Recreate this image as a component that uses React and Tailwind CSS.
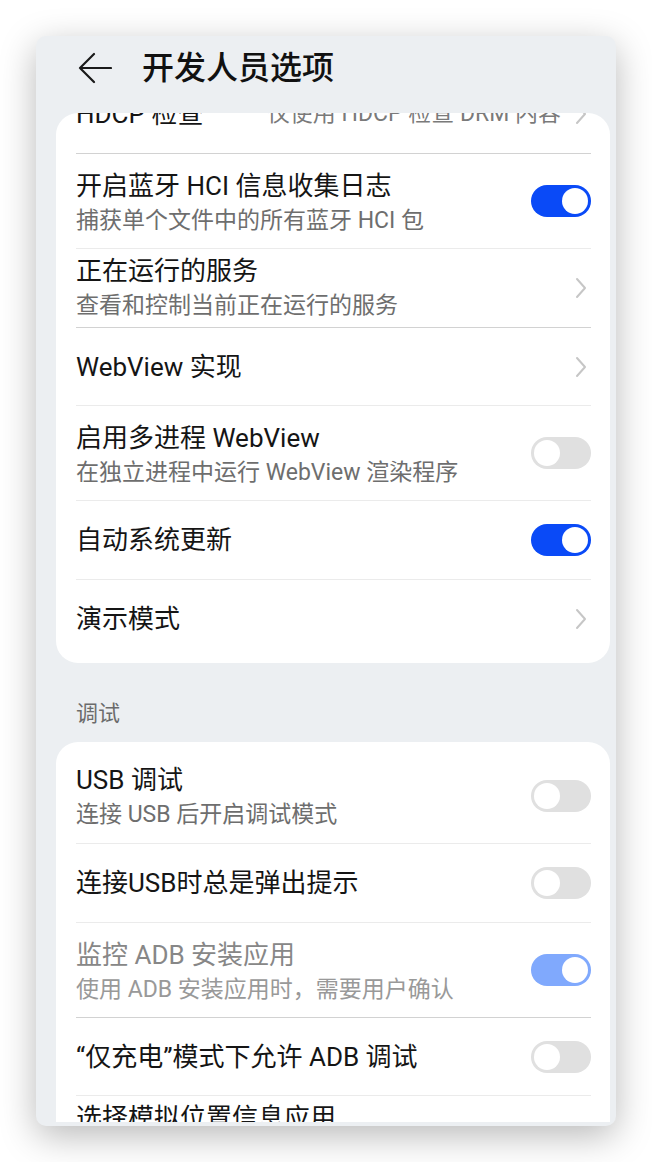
import React from "react";

function Chevron() {
  return (
    <svg width="12" height="22" viewBox="0 0 12 22" className="shrink-0 mr-[4px]">
      <path d="M2 2 L10 11 L2 20" stroke="#c6c6c6" strokeWidth="2" fill="none" strokeLinecap="round" strokeLinejoin="round" />
    </svg>
  );
}

function Toggle({ on, disabled }) {
  const track = on
    ? disabled
      ? "bg-[#80a9fd] justify-end"
      : "bg-[#0a4af7] justify-end"
    : "bg-[#e0e0e0] justify-start";
  return (
    <div className={"shrink-0 w-[60px] h-[32px] rounded-full p-[3px] flex items-center " + track}>
      <div className="w-[26px] h-[26px] rounded-full bg-white" />
    </div>
  );
}

function Row({ title, sub, value, right, h, divider, disabled }) {
  const hCls = h === 95 ? "h-[95px]" : h === 79 ? "h-[79px]" : "h-[78px]";
  const divCls =
    divider === "dark" ? "border-t border-[#d2d2d2]" : divider === "light" ? "border-t border-[#ebebeb]" : "";
  return (
    <div className={"flex items-center " + hCls + " " + divCls}>
      <div className={"flex-1 min-w-0 flex flex-col " + (sub && h === 95 ? "mt-[3px]" : "")}>
        <div className={"text-[26px] leading-[36px] whitespace-nowrap " + (disabled ? "text-[#878787]" : "text-[#151515]")}>
          {title}
        </div>
        {sub && (
          <div className={"text-[23px] leading-[34px] whitespace-nowrap " + (disabled ? "text-[#999999]" : "text-[#6e6e6e]")}>
            {sub}
          </div>
        )}
      </div>
      {value && <div className="text-[23px] leading-[34px] text-[#7a7a7a] whitespace-nowrap mr-[14px]">{value}</div>}
      {right === "chevron" && <Chevron />}
      {right === "on" && <Toggle on />}
      {right === "off" && <Toggle />}
      {right === "disabled-on" && <Toggle on disabled />}
    </div>
  );
}

const card1 = [
  { title: "HDCP 检查", value: "仅使用 HDCP 检查 DRM 内容", right: "chevron", h: 78 },
  { title: "开启蓝牙 HCI 信息收集日志", sub: "捕获单个文件中的所有蓝牙 HCI 包", right: "on", h: 95, divider: "dark" },
  { title: "正在运行的服务", sub: "查看和控制当前正在运行的服务", right: "chevron", h: 79, divider: "light" },
  { title: "WebView 实现", right: "chevron", h: 78, divider: "dark" },
  { title: "启用多进程 WebView", sub: "在独立进程中运行 WebView 渲染程序", right: "off", h: 95, divider: "light" },
  { title: "自动系统更新", right: "on", h: 79, divider: "light" },
  { title: "演示模式", right: "chevron", h: 78, divider: "light" },
];

const card2 = [
  { title: "USB 调试", sub: "连接 USB 后开启调试模式", right: "off", h: 95 },
  { title: "连接USB时总是弹出提示", right: "off", h: 79, divider: "light" },
  { title: "监控 ADB 安装应用", sub: "使用 ADB 安装应用时，需要用户确认", right: "disabled-on", h: 95, divider: "light", disabled: true },
  { title: "“仅充电”模式下允许 ADB 调试", right: "off", h: 78, divider: "dark" },
  { title: "选择模拟位置信息应用", sub: "未设置模拟位置信息应用", right: "chevron", h: 79, divider: "light" },
];

export default function App() {
  return (
    <div className="w-[652px] h-[1162px] bg-white p-[36px] font-['Roboto','Noto_Sans_CJK_SC',sans-serif]">
      <div className="w-[580px] h-[1090px] bg-[#eceff2] rounded-[10px] shadow-[0_10px_36px_rgba(0,0,0,0.28)] flex flex-col overflow-hidden">
        <div className="h-[77px] shrink-0 flex items-center pl-[42px] pb-[13px]">
          <svg width="34" height="32" viewBox="0 0 34 32" className="shrink-0">
            <path d="M16 2 L2 16 L16 30 M2 16 H33" stroke="#1a1a1a" strokeWidth="2.2" fill="none" strokeLinecap="round" strokeLinejoin="round" />
          </svg>
          <div className="ml-[30px] text-[32px] leading-[40px] font-medium text-[#111111]">开发人员选项</div>
        </div>
        <div className="h-[1009px] ml-[20px] mr-[6px] overflow-hidden rounded-t-[22px] shrink-0">
          <div className="-mt-[44px] bg-white rounded-[22px] py-[6px] pl-[20px] pr-[19px]">
            {card1.map((r, i) => (
              <Row key={i} {...r} />
            ))}
          </div>
          <div className="pt-[36px] pb-[13px] px-[20px] text-[22px] leading-[30px] text-[#6b6b6b]">调试</div>
          <div className="bg-white rounded-[22px] py-[6px] pl-[20px] pr-[19px]">
            {card2.map((r, i) => (
              <Row key={i} {...r} />
            ))}
          </div>
        </div>
      </div>
    </div>
  );
}
